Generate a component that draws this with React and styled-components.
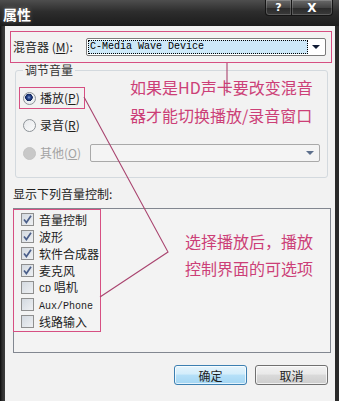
import styled, { createGlobalStyle } from "styled-components";

const GlobalStyle = createGlobalStyle`
  html, body {
    margin: 0;
    padding: 0;
    background: #1e1e1e;
  }
  body {
    font-family: "Noto Sans CJK SC", "Noto Sans", sans-serif;
    font-size: 12px;
    color: #1e1e1e;
  }
`;

const Window = styled.div`
  position: relative;
  width: 339px;
  height: 401px;
  display: flex;
  flex-direction: column;
  overflow: hidden;
  background: linear-gradient(90deg, #0c0c0c 0, #2c2c2c 2px, #3a3a3a 4px, #2a2a2a 100%);
`;

const TitleBar = styled.div`
  height: 26px;
  flex: none;
  display: flex;
  justify-content: space-between;
  align-items: flex-start;
  background: linear-gradient(180deg, #4e4e4e 0%, #2d2d2d 45%, #1c1c1c 100%);
`;

const Title = styled.span`
  padding: 6px 0 0 3px;
  line-height: 16px;
  font-size: 14px;
  font-weight: 700;
  color: #ffffff;
  text-shadow: 0 0 4px rgba(255, 255, 255, 0.35);
`;

const CaptionButtons = styled.div`
  display: flex;
  margin-right: 6px;
`;

const CaptionButton = styled.div`
  width: ${(p) => p.$w}px;
  height: 16px;
  box-sizing: border-box;
  display: flex;
  align-items: center;
  justify-content: center;
  border: 1px solid #151515;
  border-top: none;
  border-radius: ${(p) => (p.$first ? "0 0 0 4px" : "0 0 4px 0")};
  background: linear-gradient(180deg, #6a6a6a 0%, #444 50%, #2a2a2a 51%, #3a3a3a 100%);
  box-shadow: inset 0 0 0 1px rgba(255, 255, 255, 0.18);
  color: #fff;
  font-family: "DejaVu Sans", sans-serif;
  font-weight: 700;
  font-size: ${(p) => p.$size}px;
  & + & {
    border-left: none;
  }
`;

const Body = styled.div`
  flex: 1;
  margin: 0 4px 0 5px;
  background: #f2f2f2;
  display: flex;
  flex-direction: column;
`;

const MixerRow = styled.div`
  height: 32px;
  box-sizing: border-box;
  margin: 5px 3px 0 5px;
  padding: 0 5px 0 2px;
  border: 1px solid #d64f82;
  display: flex;
  align-items: center;
  justify-content: space-between;
`;

const Label = styled.span`
  font-size: 12px;
  line-height: 16px;
  color: ${(p) => (p.$disabled ? "#a3a3a3" : "#1e1e1e")};
  u {
    text-decoration: underline;
  }
`;

const Combo = styled.div`
  width: ${(p) => p.$w}px;
  height: 18px;
  box-sizing: border-box;
  border: 1px solid ${(p) => (p.$disabled ? "#a9a9a9" : "#7a7a7a")};
  border-radius: 2px;
  background: ${(p) => (p.$disabled ? "#f4f4f4" : "#ffffff")};
  display: flex;
  align-items: stretch;
  padding: 1px;
`;

const ComboValue = styled.div`
  flex: 1;
  box-sizing: border-box;
  border: 1px dotted #000;
  background: #cde8f8;
  font-family: "Liberation Mono", monospace;
  font-size: 10px;
  line-height: 12px;
  padding-left: 1px;
  color: #000;
`;

const ComboArrow = styled.div`
  width: 16px;
  margin-left: auto;
  display: flex;
  align-items: center;
  justify-content: center;
  &::after {
    content: "";
    border-left: 4px solid transparent;
    border-right: 4px solid transparent;
    border-top: 4px solid ${(p) => (p.$disabled ? "#5d6f8c" : "#0f1a33")};
  }
`;

const Group = styled.fieldset`
  margin: 0 0 0 10px;
  width: 313px;
  box-sizing: border-box;
  padding: 10px 0 13px 3px;
  border: 1px solid #d3d9de;
  border-radius: 3px;
  display: flex;
  flex-direction: column;
  gap: 5px;
  min-width: 0;
`;

const Legend = styled.legend`
  margin-left: 4px;
  padding: 0 2px;
  font-size: 12px;
  line-height: 14px;
  color: #333;
`;

const RadioRow = styled.div`
  height: 22px;
  box-sizing: border-box;
  display: flex;
  align-items: center;
  gap: 4px;
  padding-left: 4px;
  margin-top: ${(p) => p.$mt || 0}px;
  ${(p) =>
    p.$marked &&
    `width: 66px;
    border: 1px solid #d64f82;
    padding-left: 3px;`}
`;

const Radio = styled.span`
  width: 13px;
  height: 13px;
  box-sizing: border-box;
  border-radius: 50%;
  flex: none;
  border: 1px solid ${(p) => (p.$disabled ? "#c4c4c4" : "#8d9398")};
  background: ${(p) =>
    p.$disabled
      ? "#c8c8c8"
      : p.$checked
      ? "radial-gradient(circle at 45% 40%, #8fa6d6 0, #2f4f99 1.5px, #0d1f55 3.5px, #eef1f4 4px, #e2e6ea 100%)"
      : "linear-gradient(135deg, #e7e9ec, #fbfbfb)"};
`;

const OtherCombo = styled(Combo)`
  margin-left: 5px;
`;

const SectionLabel = styled(Label)`
  margin: 8px 0 0 8px;
`;

const ListBox = styled.div`
  margin: 6px 0 0 8px;
  width: 318px;
  height: 145px;
  box-sizing: border-box;
  border: 1px solid #828790;
  background: #f3f3f3;
`;

const Marked = styled.div`
  width: 88px;
  height: 123px;
  box-sizing: border-box;
  margin-left: -1px;
  padding-top: 1px;
  border: 1px solid #d64f82;
  display: flex;
  flex-direction: column;
`;

const CheckRow = styled.div`
  height: 17px;
  display: flex;
  align-items: center;
  gap: 5px;
  padding-left: 7px;
  white-space: nowrap;
  font-size: 12px;
  line-height: 17px;
`;

const Latin = styled.span`
  font-family: "Liberation Mono", monospace;
  font-size: 10px;
`;

const Box = styled.span`
  width: 13px;
  height: 13px;
  box-sizing: border-box;
  flex: none;
  border: 1px solid #8f8f8f;
  background: linear-gradient(135deg, #d3d9e0, #eef0f3);
  display: flex;
  align-items: center;
  justify-content: center;
`;

const Buttons = styled.div`
  margin-top: 12px;
  padding-right: 7px;
  display: flex;
  justify-content: flex-end;
  gap: 8px;
`;

const Button = styled.div`
  width: 73px;
  height: 20px;
  box-sizing: border-box;
  border-radius: 3px;
  border: 1px solid ${(p) => (p.$primary ? "#3c7fb1" : "#707070")};
  background: ${(p) =>
    p.$primary
      ? "linear-gradient(180deg, #e5f4fc 0%, #d3edfb 45%, #b6e0f8 50%, #a4d6f3 100%)"
      : "linear-gradient(180deg, #f2f2f2 0%, #e9e9e9 45%, #dadada 50%, #cdcdcd 100%)"};
  box-shadow: inset 0 0 0 1px rgba(255, 255, 255, 0.7);
  display: flex;
  align-items: center;
  justify-content: center;
  font-size: 12px;
  color: #1e1e1e;
`;

const Overlay = styled.svg`
  position: absolute;
  left: 0;
  top: 0;
  pointer-events: none;
`;

const Callout = styled.div`
  position: absolute;
  left: ${(p) => p.$x}px;
  top: ${(p) => p.$y}px;
  font-size: 16px;
  line-height: ${(p) => p.$lh}px;
  color: #cc3f77;
  white-space: nowrap;
`;

function Check() {
  return (
    <svg width="11" height="11" viewBox="0 0 11 11">
      <path d="M2 5.5 L4.4 8.6 L9 1.8" fill="none" stroke="#4b5f8a" strokeWidth="1.7" />
    </svg>
  );
}

const controls = [
  { name: "音量控制", on: true },
  { name: "波形", on: true },
  { name: "软件合成器", on: true },
  { name: "麦克风", on: true },
  { name: <><Latin>CD</Latin> 唱机</>, key: "cd", on: false },
  { name: <Latin>Aux/Phone</Latin>, key: "aux", on: false },
  { name: "线路输入", on: false },
];

export default function App() {
  return (
    <>
      <GlobalStyle />
      <Window>
        <TitleBar>
          <Title>属性</Title>
          <CaptionButtons>
            <CaptionButton $w={27} $size={11} $first>?</CaptionButton>
            <CaptionButton $w={41} $size={12}>X</CaptionButton>
          </CaptionButtons>
        </TitleBar>
        <Body>
          <MixerRow>
            <Label>
              混音器 (<u>M</u>):
            </Label>
            <Combo $w={240}>
              <ComboValue>C-Media Wave Device</ComboValue>
              <ComboArrow />
            </Combo>
          </MixerRow>

          <Group>
            <Legend>调节音量</Legend>
            <RadioRow $marked>
              <Radio $checked />
              <Label>
                播放(<u>P</u>)
              </Label>
            </RadioRow>
            <RadioRow>
              <Radio />
              <Label>
                录音(<u>R</u>)
              </Label>
            </RadioRow>
            <RadioRow $mt={1}>
              <Radio $disabled />
              <Label $disabled>
                其他(<u>O</u>)
              </Label>
              <OtherCombo $w={230} $disabled>
                <ComboArrow $disabled />
              </OtherCombo>
            </RadioRow>
          </Group>

          <SectionLabel>显示下列音量控制:</SectionLabel>
          <ListBox>
            <Marked>
              {controls.map((c) => (
                <CheckRow key={c.key || c.name}>
                  <Box>{c.on && <Check />}</Box>
                  <span>{c.name}</span>
                </CheckRow>
              ))}
            </Marked>
          </ListBox>

          <Buttons>
            <Button $primary>确定</Button>
            <Button>取消</Button>
          </Buttons>
        </Body>

        <Overlay width="339" height="401">
          <path d="M227 63 L227 93" stroke="#a9446f" strokeWidth="1.1" fill="none" />
          <path d="M84 97 L168 252 L100 297" stroke="#a9446f" strokeWidth="1.1" fill="none" />
        </Overlay>
        <Callout $x={130} $y={73} $lh={28}>
          如果是HD声卡要改变混音
          <br />
          器才能切换播放/录音窗口
        </Callout>
        <Callout $x={185} $y={228} $lh={27}>
          选择播放后，播放
          <br />
          控制界面的可选项
        </Callout>
      </Window>
    </>
  );
}
